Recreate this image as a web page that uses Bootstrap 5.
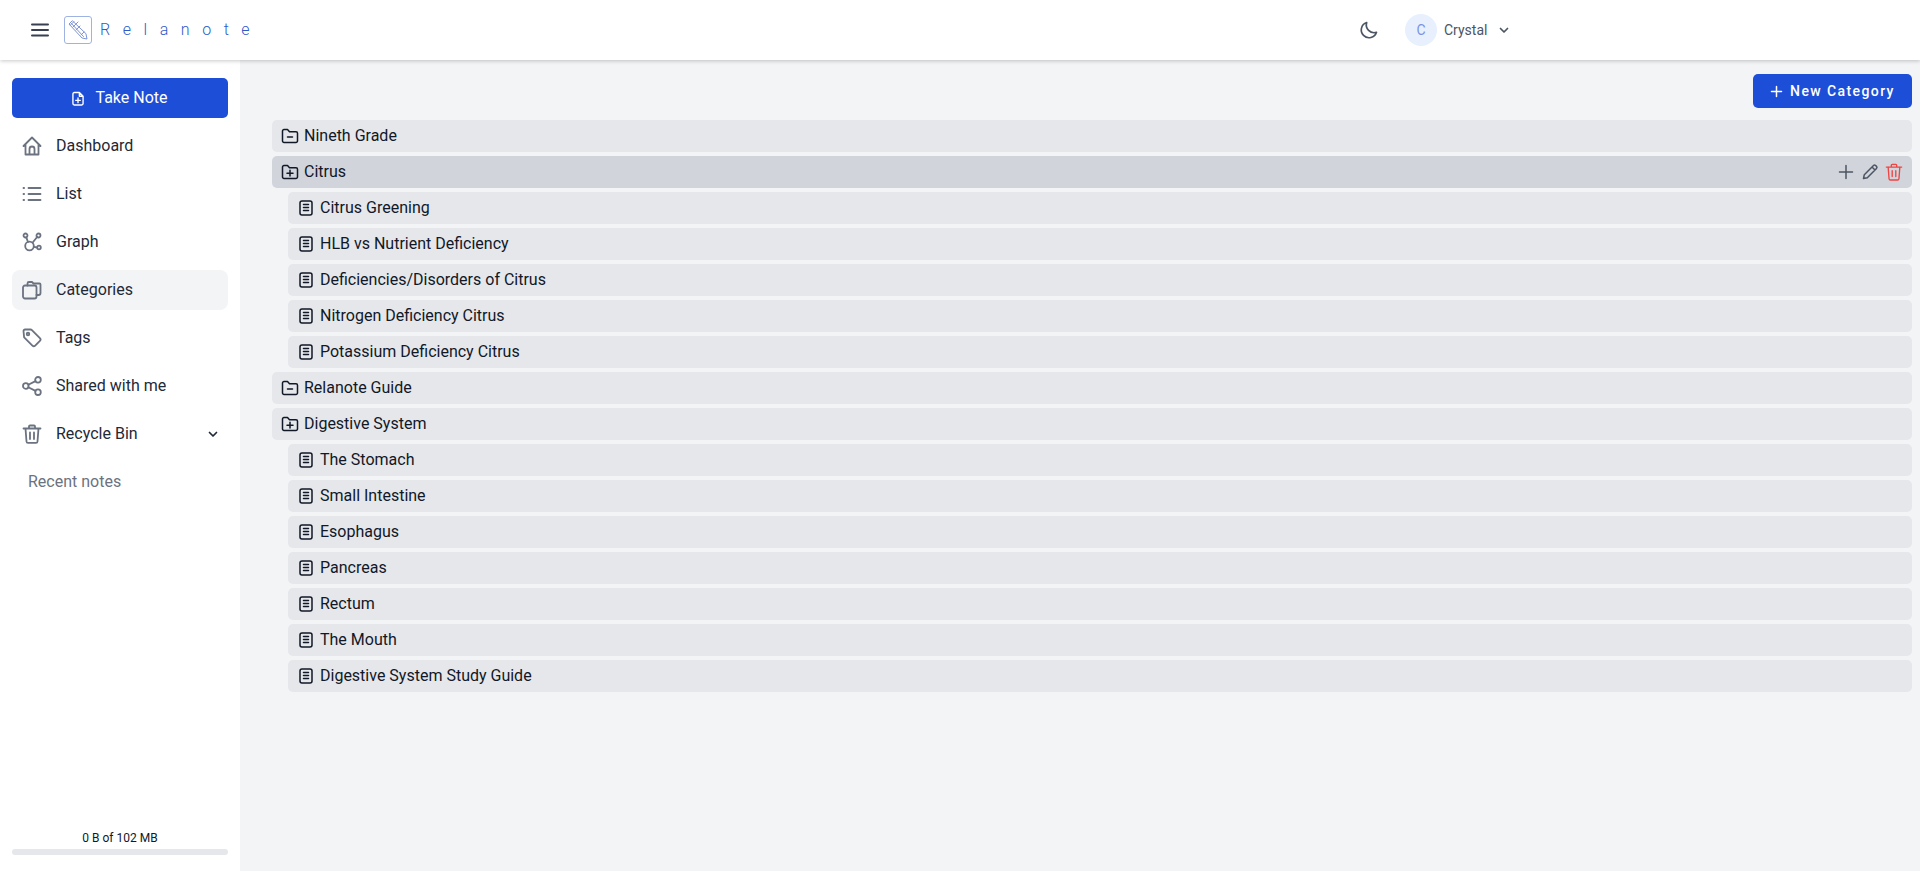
<!DOCTYPE html>
<html lang="en">
<head>
<meta charset="utf-8">
<title>Relanote</title>
<link href="https://cdn.jsdelivr.net/npm/bootstrap@5.3.0/dist/css/bootstrap.min.css" rel="stylesheet">
<style>
html,body{height:100%;overflow:hidden}
body{font-family:Roboto,"Liberation Sans",sans-serif;background:#f3f4f6;color:#111827;font-size:16px}
svg{display:block;flex:none;fill:none;stroke:currentColor;stroke-width:1.5;stroke-linecap:round;stroke-linejoin:round}
.topbar{height:60px;background:#fff;box-shadow:0 1px 4px rgba(0,0,0,.22);position:relative;z-index:2;padding-left:31px}
.burger{color:#374151}
.logo-box{width:28px;height:28px;margin-left:15px;border:1px solid #9fb2e4;border-radius:3px;color:#7f95d6}
.logo-text{font-size:16px;font-weight:300;color:#2f5bc9;letter-spacing:12.55px;margin-left:8px;line-height:1}
.top-right{margin-left:auto;width:561px;color:#4b5563}
.avatar{width:32px;height:32px;border-radius:50%;background:#e8f0fe;color:#7c93e0;font-size:14px;margin-left:26px}
.uname{font-size:14px;margin-left:7px;color:#4b5563}
.uchev{margin-left:11px}
.shell{height:811px}
.sidebar{width:240px;background:#fff;padding:18px 12px 0;flex:none}
.take-btn{height:40px;background:#1d4ed8;border-radius:5px;color:#fff;font-size:16px;border:0;width:100%;gap:11px;margin-bottom:8px}
.take-btn:hover{background:#1d4ed8;color:#fff}
.side-item{height:40px;margin-bottom:8px;border-radius:8px;padding-left:10px;color:#1f2937;font-size:16px;text-decoration:none;gap:14px}
.side-item svg.ico{color:#6b7280;stroke-width:1.8}
.side-item .bin-chev{margin-right:9px}
.side-item.on{background:#f3f4f6}
.recent{color:#6b7280;font-size:16px;padding-left:16px;height:40px}
.usage{margin-top:auto;padding-bottom:16px;font-size:12px;color:#111827;text-align:center}
.usage-bar{height:6px;background:#e5e7eb;border-radius:4px;margin-top:2px}
.main-area{padding:14px 8px 0 32px;min-width:0}
.new-btn{height:34px;width:159px;background:#1d4ed8;color:#fff;border:0;border-radius:5px;font-size:14px;font-weight:500;letter-spacing:1.4px;gap:7px;padding:0}
.new-btn:hover{background:#1d4ed8;color:#fff}
.tree{margin-top:12px;gap:4px}
.tree-row{height:32px;background:#e5e7eb;border-radius:5px;padding-left:9px;gap:5px;color:#111827;font-size:16px}
.tree-row.child{margin-left:16px}
.tree-row.active{background:#d1d5db}
.acts{margin-left:auto;gap:6px;padding-right:9px;color:#4b5563}
.del{color:#ef4444}
</style>
</head>
<body>
<svg width="0" height="0" style="position:absolute">
<defs>
<symbol id="f-minus" viewBox="0 0 18 18"><path d="M1.500 14V4A1.500 1.500 0 0 1 3 2.500h3.500l2 2.200H15A1.500 1.500 0 0 1 16.500 6.200V14a1.500 1.500 0 0 1-1.500 1.500H3A1.500 1.500 0 0 1 1.500 14zM6.500 10h5"/></symbol>
<symbol id="f-plus" viewBox="0 0 18 18"><path d="M1.500 14V4A1.500 1.500 0 0 1 3 2.500h3.500l2 2.200H15a1.500 1.500 0 0 1 1.500 1.500V14a1.500 1.500 0 0 1-1.500 1.500H3A1.500 1.500 0 0 1 1.500 14zM6 10.200h6M9 7.300v5.800"/></symbol>
<symbol id="doc" viewBox="0 0 18 18"><rect x="3" y="2" width="12" height="14" rx="2"/><path d="M6.500 5.500h5M6.500 8.500h5M6.500 11.500h5"/></symbol>
</defs>
</svg>

<header class="topbar d-flex align-items-center">
  <svg class="burger" width="18" height="14" viewBox="0 0 18 14" style="stroke-width:2"><path d="M1 1.500h16M1 7h16M1 12.500h16"/></svg>
  <div class="logo-box d-flex align-items-center justify-content-center">
    <svg width="24" height="24" viewBox="0 0 24 24" style="stroke-width:1"><path d="M6 3l-3 3 13 14 5 1-1-5zM4.500 4.500l13 14M8 3.500l-3.500 3.500M15 17l3-3"/><path d="M7 9l5-5M10 12l4-4"/></svg>
  </div>
  <span class="logo-text">Relanote</span>
  <div class="top-right d-flex align-items-center">
    <svg width="20" height="20" viewBox="0 0 20 20" style="stroke-width:1.700"><path d="M17.500 12.300A7.800 7.800 0 0 1 7.700 2.500a7.800 7.800 0 1 0 9.800 9.800z"/></svg>
    <div class="avatar d-flex align-items-center justify-content-center">C</div>
    <span class="uname">Crystal</span>
    <svg width="12" height="12" viewBox="0 0 12 12" class="uchev" style="stroke-width:1.700"><path d="M2.500 4.500 6 8l3.500-3.500"/></svg>
  </div>
</header>

<div class="shell d-flex">
  <aside class="sidebar d-flex flex-column">
    <button class="btn take-btn d-flex align-items-center justify-content-center" type="button">
      <svg width="12" height="15" viewBox="0 0 13 16" style="stroke-width:1.500"><path d="M2.500 1.500h5.500l4 4v8a1.500 1.500 0 0 1-1.500 1.500h-8A1.500 1.500 0 0 1 1 13.500v-10.500a1.500 1.500 0 0 1 1.500-1.500zM8 1.500v4h4M6.500 7.500v5M4 10h5"/></svg>
      Take Note
    </button>
    <a class="side-item d-flex align-items-center" href="#"><svg class="ico" width="20" height="20" viewBox="0 0 20 20"><path d="M1.500 10 10 1.500 18.500 10M3.500 8.500V18.500h13V8.500M7.500 18.500V13a2.500 2.500 0 0 1 5 0v5.500"/></svg>Dashboard</a>
    <a class="side-item d-flex align-items-center" href="#"><svg class="ico" width="20" height="20" viewBox="0 0 20 20"><path d="M6.500 4h12M6.500 10h12M6.500 16h12M1.500 4h.6M1.500 10h.6M1.500 16h.6"/></svg>List</a>
    <a class="side-item d-flex align-items-center" href="#"><svg class="ico" width="20" height="20" viewBox="0 0 20 20"><circle cx="3.500" cy="3.500" r="2"/><circle cx="16.500" cy="3.500" r="2"/><circle cx="17" cy="15.500" r="1.800"/><circle cx="7.500" cy="14" r="4.300"/><path d="M4.300 5.400l1.700 4.600M15.100 5l-4.600 5.800M11.800 14.800l3.400.7"/></svg>Graph</a>
    <a class="side-item on d-flex align-items-center" href="#"><svg class="ico" width="20" height="20" viewBox="0 0 20 20"><path d="M5.500 5.500V3.500A1.500 1.500 0 0 1 7 2h3l1.500 1.500H17.500a1 1 0 0 1 1 1V13a2 2 0 0 1-2 2h-2"/><rect x="1" y="5.500" width="13.500" height="13" rx="2"/></svg>Categories</a>
    <a class="side-item d-flex align-items-center" href="#"><svg class="ico" width="20" height="20" viewBox="0 0 20 20"><path d="M1.500 3a1.500 1.500 0 0 1 1.500-1.500h5.500a2 2 0 0 1 1.400.6l8 8a2 2 0 0 1 0 2.800l-4.700 4.700a2 2 0 0 1-2.800 0l-8-8a2 2 0 0 1-.4-1.400z"/><circle cx="6" cy="6" r="1.300"/></svg>Tags</a>
    <a class="side-item d-flex align-items-center" href="#"><svg class="ico" width="20" height="20" viewBox="0 0 20 20"><circle cx="3.800" cy="10" r="2.800"/><circle cx="16" cy="3.800" r="2.800"/><circle cx="16" cy="16.200" r="2.800"/><path d="M6.300 8.700l7.200-3.600M6.300 11.300l7.200 3.600"/></svg>Shared with me</a>
    <a class="side-item d-flex align-items-center" href="#"><svg class="ico" width="20" height="20" viewBox="0 0 20 20"><path d="M1.500 4.500h17M7 4.500V2.500a1 1 0 0 1 1-1h4a1 1 0 0 1 1 1v2M3.500 4.500l1 13a1.500 1.500 0 0 0 1.500 1.400h8a1.500 1.500 0 0 0 1.500-1.400l1-13M8 8.500v6.500M12 8.500v6.500"/></svg>Recycle Bin
      <svg class="ms-auto bin-chev" width="12" height="12" viewBox="0 0 12 12" style="stroke-width:1.700"><path d="M2.500 4.500 6 8l3.500-3.500"/></svg></a>
    <div class="recent d-flex align-items-center">Recent notes</div>
    <div class="usage">0 B of 102 MB<div class="usage-bar"></div></div>
  </aside>

  <main class="main-area flex-grow-1">
    <div class="d-flex justify-content-end">
      <button class="btn new-btn d-flex align-items-center justify-content-center" type="button">
        <svg width="13" height="13" viewBox="0 0 13 13"><path d="M6.500 1.500v10M1.500 6.500h10"/></svg>New Category
      </button>
    </div>
    <div class="tree d-flex flex-column">
      <div class="tree-row d-flex align-items-center"><svg width="18" height="18"><use href="#f-minus"/></svg>Nineth Grade</div>
      <div class="tree-row active d-flex align-items-center"><svg width="18" height="18"><use href="#f-plus"/></svg>Citrus
        <div class="acts d-flex align-items-center">
          <svg width="18" height="18" viewBox="0 0 18 18"><path d="M9 2.500v13M2.500 9h13"/></svg>
          <svg width="18" height="18" viewBox="0 0 18 18"><path d="M2.500 15.500l.8-3.800L12.500 2.500a1.500 1.500 0 0 1 2.100 0l.9.9a1.500 1.500 0 0 1 0 2.100L6.300 14.700zM11 4l3 3"/></svg>
          <svg class="del" width="18" height="18" viewBox="0 0 20 20"><path d="M1.500 4.500h17M7 4.500V2.500a1 1 0 0 1 1-1h4a1 1 0 0 1 1 1v2M3.500 4.500l1 13a1.500 1.500 0 0 0 1.500 1.400h8a1.500 1.500 0 0 0 1.500-1.400l1-13M8 8.500v6.500M12 8.500v6.500"/></svg>
        </div>
      </div>
      <div class="tree-row child d-flex align-items-center"><svg width="18" height="18"><use href="#doc"/></svg>Citrus Greening</div>
      <div class="tree-row child d-flex align-items-center"><svg width="18" height="18"><use href="#doc"/></svg>HLB vs Nutrient Deficiency</div>
      <div class="tree-row child d-flex align-items-center"><svg width="18" height="18"><use href="#doc"/></svg>Deficiencies/Disorders of Citrus</div>
      <div class="tree-row child d-flex align-items-center"><svg width="18" height="18"><use href="#doc"/></svg>Nitrogen Deficiency Citrus</div>
      <div class="tree-row child d-flex align-items-center"><svg width="18" height="18"><use href="#doc"/></svg>Potassium Deficiency Citrus</div>
      <div class="tree-row d-flex align-items-center"><svg width="18" height="18"><use href="#f-minus"/></svg>Relanote Guide</div>
      <div class="tree-row d-flex align-items-center"><svg width="18" height="18"><use href="#f-plus"/></svg>Digestive System</div>
      <div class="tree-row child d-flex align-items-center"><svg width="18" height="18"><use href="#doc"/></svg>The Stomach</div>
      <div class="tree-row child d-flex align-items-center"><svg width="18" height="18"><use href="#doc"/></svg>Small Intestine</div>
      <div class="tree-row child d-flex align-items-center"><svg width="18" height="18"><use href="#doc"/></svg>Esophagus</div>
      <div class="tree-row child d-flex align-items-center"><svg width="18" height="18"><use href="#doc"/></svg>Pancreas</div>
      <div class="tree-row child d-flex align-items-center"><svg width="18" height="18"><use href="#doc"/></svg>Rectum</div>
      <div class="tree-row child d-flex align-items-center"><svg width="18" height="18"><use href="#doc"/></svg>The Mouth</div>
      <div class="tree-row child d-flex align-items-center"><svg width="18" height="18"><use href="#doc"/></svg>Digestive System Study Guide</div>
    </div>
  </main>
</div>
<script src="https://cdn.jsdelivr.net/npm/bootstrap@5.3.0/dist/js/bootstrap.bundle.min.js"></script>
</body>
</html>
